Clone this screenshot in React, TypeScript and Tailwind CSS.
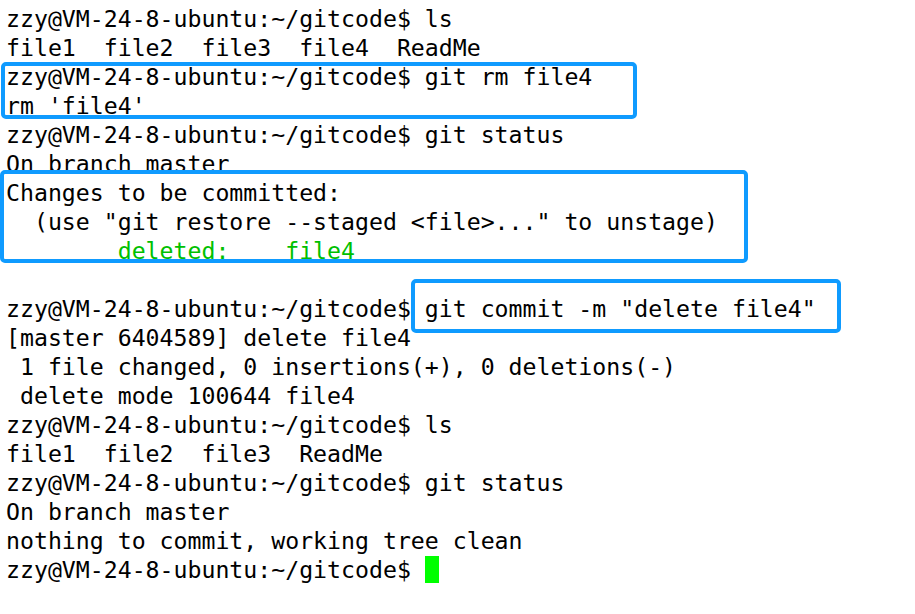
const lines: { text: string; green?: boolean }[] = [
  { text: "zzy@VM-24-8-ubuntu:~/gitcode$ ls" },
  { text: "file1  file2  file3  file4  ReadMe" },
  { text: "zzy@VM-24-8-ubuntu:~/gitcode$ git rm file4" },
  { text: "rm 'file4'" },
  { text: "zzy@VM-24-8-ubuntu:~/gitcode$ git status" },
  { text: "On branch master" },
  { text: "Changes to be committed:" },
  { text: '  (use "git restore --staged <file>..." to unstage)' },
  { text: "        deleted:    file4", green: true },
  { text: "" },
  { text: 'zzy@VM-24-8-ubuntu:~/gitcode$ git commit -m "delete file4"' },
  { text: "[master 6404589] delete file4" },
  { text: " 1 file changed, 0 insertions(+), 0 deletions(-)" },
  { text: " delete mode 100644 file4" },
  { text: "zzy@VM-24-8-ubuntu:~/gitcode$ ls" },
  { text: "file1  file2  file3  ReadMe" },
  { text: "zzy@VM-24-8-ubuntu:~/gitcode$ git status" },
  { text: "On branch master" },
  { text: "nothing to commit, working tree clean" },
];

export default function App() {
  return (
    <div className="relative w-[915px] h-[614px] bg-white overflow-hidden">
      <div
        className="pt-[4px] pl-[6px] text-[23.2px] leading-[29px] text-black whitespace-pre"
        style={{ fontFamily: '"DejaVu Sans Mono", monospace' }}
      >
        {lines.map((line, i) => (
          <div key={i} className={line.green ? "text-[#00c000] h-[29px]" : "h-[29px]"}>
            {line.text}
          </div>
        ))}
        <div className="h-[29px] flex items-center">
          <span>zzy@VM-24-8-ubuntu:~/gitcode$ </span>
          <span className="inline-block w-[14px] h-[27px] bg-[#00ff00]" />
        </div>
      </div>

      {/* highlight boxes */}
      <div className="absolute left-[1px] top-[62px] w-[636px] h-[57px] border-[4px] border-[#0f9bff] rounded-[5px]" />
      <div className="absolute left-[0px] top-[170px] w-[748px] h-[93px] border-[4px] border-[#0f9bff] rounded-[5px]" />
      <div className="absolute left-[411px] top-[279px] w-[430px] h-[54px] border-[4px] border-[#0f9bff] rounded-[5px]" />
    </div>
  );
}
